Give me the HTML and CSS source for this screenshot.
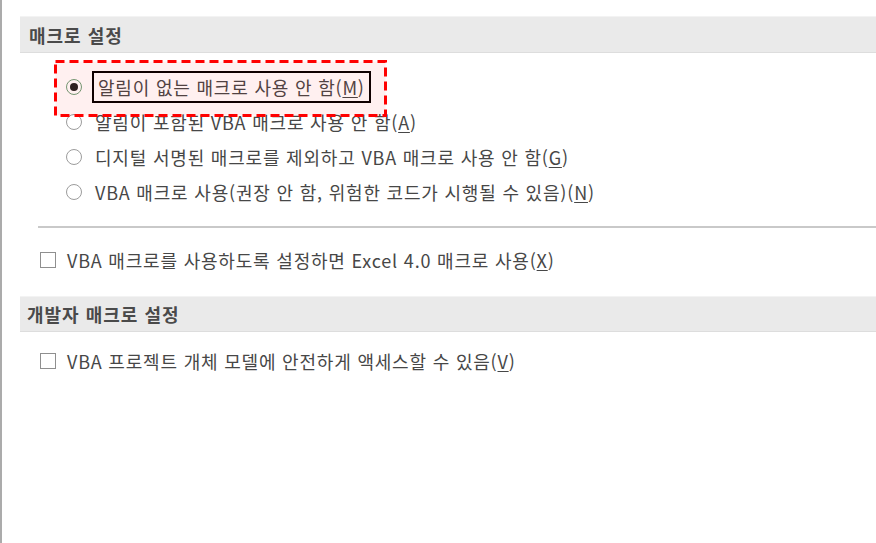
FILE: index.html
```html
<!DOCTYPE html>
<html lang="ko">
<head>
<meta charset="utf-8">
<title>매크로 설정</title>
<link rel="stylesheet" href="styles.css">
</head>
<body>
<div class="pane">
  <div class="section-head">매크로 설정</div>
  <div class="options">
    <div class="row">
      <span class="radio checked"></span>
      <span class="label focused">알림이 없는 매크로 사용 안 함(<u>M</u>)</span>
    </div>
    <div class="row">
      <span class="radio"></span>
      <span class="label">알림이 포함된 VBA 매크로 사용 안 함(<u>A</u>)</span>
    </div>
    <div class="row">
      <span class="radio"></span>
      <span class="label">디지털 서명된 매크로를 제외하고 VBA 매크로 사용 안 함(<u>G</u>)</span>
    </div>
    <div class="row">
      <span class="radio"></span>
      <span class="label">VBA 매크로 사용(권장 안 함, 위험한 코드가 시행될 수 있음)(<u>N</u>)</span>
    </div>
  </div>
  <div class="separator"></div>
  <div class="row check-row first-check">
    <span class="checkbox"></span>
    <span class="label">VBA 매크로를 사용하도록 설정하면 Excel 4.0 매크로 사용(<u>X</u>)</span>
  </div>
  <div class="section-head second">개발자 매크로 설정</div>
  <div class="row check-row second-check">
    <span class="checkbox"></span>
    <span class="label">VBA 프로젝트 개체 모델에 안전하게 액세스할 수 있음(<u>V</u>)</span>
  </div>
  <svg class="highlight" width="333" height="57" viewBox="0 0 333 57">
    <rect x="1.5" y="1.5" width="330" height="54" fill="rgba(255,0,0,0.06)" stroke="#ff0000" stroke-width="3" stroke-dasharray="9 5"/>
  </svg>
</div>
</body>
</html>
```

FILE: styles.css
```css
html, body {
  margin: 0;
  padding: 0;
  background: #ffffff;
}

body {
  font-family: "Noto Sans CJK KR", "Noto Sans", sans-serif;
  color: #474747;
  font-size: 18px;
}

.pane {
  position: relative;
  box-sizing: border-box;
  height: 543px;
  border-left: 2px solid #ababab;
  padding-top: 16px;
  overflow: hidden;
}

.section-head {
  box-sizing: border-box;
  margin-left: 18px;
  height: 37px;
  background: #eaeaea;
  border-top: 1px solid #f3f3f3;
  border-bottom: 1px solid #dddddd;
  padding-left: 9px;
  display: flex;
  align-items: center;
  font-weight: bold;
  font-size: 18px;
  letter-spacing: 1px;
  color: #4a4a4a;
}

.section-head.second {
  margin-top: 19px;
  height: 36px;
  padding-left: 7px;
}

.options {
  margin-top: 16px;
  padding-left: 64px;
}

.row {
  display: flex;
  align-items: center;
  height: 35px;
}

.radio {
  box-sizing: border-box;
  width: 16px;
  height: 16px;
  border-radius: 50%;
  border: 1px solid #9c9c9c;
  background: #ffffff;
  margin-right: 8px;
  flex: none;
  display: flex;
  align-items: center;
  justify-content: center;
}

.radio.checked {
  border: 1.5px solid #6d9f79;
  margin-right: 10px;
}

.radio.checked::after {
  content: "";
  width: 8px;
  height: 8px;
  border-radius: 50%;
  background: #222222;
}

.label {
  padding: 0 5px;
  white-space: nowrap;
  line-height: 26px;
  letter-spacing: 0.8px;
}

.label u {
  text-decoration-thickness: 1px;
  text-underline-offset: 2px;
}

.label.focused {
  border: 2px solid #000000;
  line-height: 28px;
  padding: 0 4px 0 4px;
}

.separator {
  margin-top: 17px;
  margin-left: 36px;
  height: 2px;
  background: #c9c9c9;
}

.check-row {
  padding-left: 38px;
}

.first-check {
  margin-top: 14px;
}

.second-check {
  margin-top: 11px;
}

.checkbox {
  box-sizing: border-box;
  width: 16px;
  height: 16px;
  border: 1px solid #8f8f8f;
  background: #ffffff;
  margin-right: 6px;
  flex: none;
}

.highlight {
  position: absolute;
  left: 52px;
  top: 60px;
}
```
